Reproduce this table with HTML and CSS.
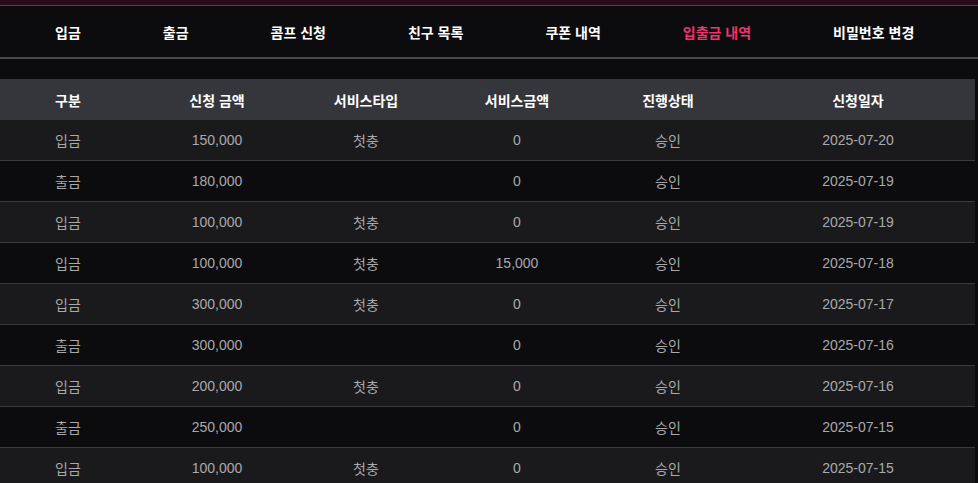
FILE: index.html
```html
<!DOCTYPE html>
<html lang="ko">
<head>
  <meta charset="UTF-8">
  <meta name="viewport" content="width=device-width, initial-scale=1.0">
  <title>입출금 내역</title>
  <link rel="stylesheet" href="styles.css">
</head>
<body>
<div class="topline"></div>

<nav class="tabs">
  <a class="tab">입금</a>
  <a class="tab">출금</a>
  <a class="tab">콤프 신청</a>
  <a class="tab">친구 목록</a>
  <a class="tab">쿠폰 내역</a>
  <a class="tab active">입출금 내역</a>
  <a class="tab">비밀번호 변경</a>
</nav>

<div class="content">
  <table class="history">
    <colgroup>
      <col class="c1"><col class="c2"><col class="c3"><col class="c4"><col class="c5"><col class="c6">
    </colgroup>
    <thead>
      <tr>
        <th>구분</th>
        <th>신청 금액</th>
        <th>서비스타입</th>
        <th>서비스금액</th>
        <th>진행상태</th>
        <th>신청일자</th>
      </tr>
    </thead>
    <tbody>
      <tr><td>입금</td><td>150,000</td><td>첫충</td><td>0</td><td>승인</td><td>2025-07-20</td></tr>
      <tr><td>출금</td><td>180,000</td><td></td><td>0</td><td>승인</td><td>2025-07-19</td></tr>
      <tr><td>입금</td><td>100,000</td><td>첫충</td><td>0</td><td>승인</td><td>2025-07-19</td></tr>
      <tr><td>입금</td><td>100,000</td><td>첫충</td><td>15,000</td><td>승인</td><td>2025-07-18</td></tr>
      <tr><td>입금</td><td>300,000</td><td>첫충</td><td>0</td><td>승인</td><td>2025-07-17</td></tr>
      <tr><td>출금</td><td>300,000</td><td></td><td>0</td><td>승인</td><td>2025-07-16</td></tr>
      <tr><td>입금</td><td>200,000</td><td>첫충</td><td>0</td><td>승인</td><td>2025-07-16</td></tr>
      <tr><td>출금</td><td>250,000</td><td></td><td>0</td><td>승인</td><td>2025-07-15</td></tr>
      <tr><td>입금</td><td>100,000</td><td>첫충</td><td>0</td><td>승인</td><td>2025-07-15</td></tr>
    </tbody>
  </table>
</div>
</body>
</html>
```

FILE: styles.css
```css
body{
  margin: 0;
  padding: 0;
  background: #0c0c0e;
  font-family: "Liberation Sans", "Noto Sans CJK KR", sans-serif;
  font-size: 14px;
  color: #fff;
}

.topline{
  height: 5px;
  background: #2b0a1c;
  border-bottom: 1px solid #48484c;
}

.tabs{
  display: flex;
  align-items: center;
  gap: 82px;
  height: 51px;
  padding-left: 55px;
  border-bottom: 2px solid #48484c;
}

.tab{
  font-weight: bold;
  color: #fff;
  text-decoration: none;
  cursor: pointer;
}

.tab.active{
  color: #f0336c;
}

.content{
  padding-top: 20px;
}

.history{
  width: 975px;
  border-collapse: collapse;
  table-layout: fixed;
}

.c1{ width: 136px; }
.c2{ width: 162px; }
.c3{ width: 136px; }
.c4{ width: 166px; }
.c5{ width: 136px; }
.c6{ width: 239px; }

.history th{
  height: 41px;
  padding: 0;
  background: #34363c;
  font-weight: bold;
  color: #fff;
  text-align: center;
}

.history td{
  height: 40px;
  padding: 0;
  text-align: center;
  color: #a9a9ab;
  border-bottom: 1px solid #3a3a3e;
}

.history tbody tr:nth-child(odd){
  background: #1a1a1d;
}

.history tbody tr:nth-child(even){
  background: #0c0c0e;
}

.history th:last-child,
.history td:last-child{
  padding-left: 5px;
}
```
